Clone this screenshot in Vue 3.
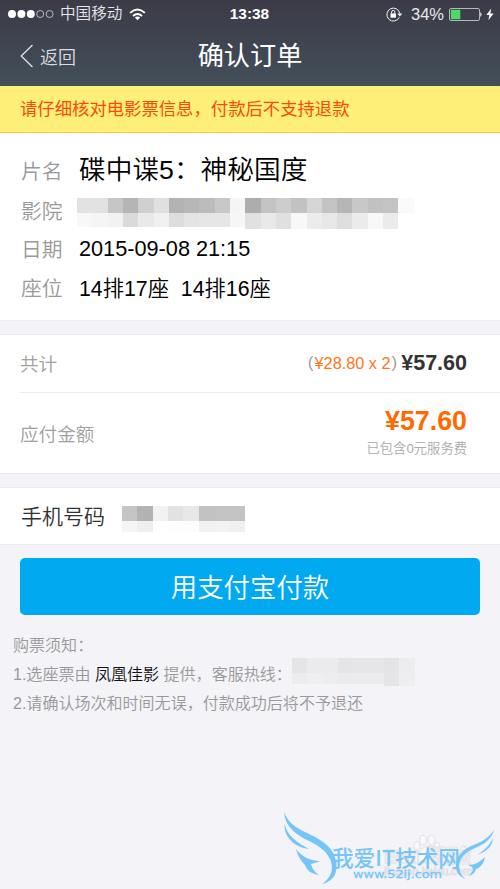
<script setup>
const cinema = [
  ['#e2e2e2', '#e2e2e2', '#c6c6c6', '#b5b5b5', '#d0d0d0', '#e0e0e0', '#b3b3b3', '#b7b7b7', '#bcbcbc', '#c8c8c8', '#f5f5f5', '#adadad', '#c3c3c3', '#cdcdcd', '#c2c2c2', '#d5d5d5', '#c3c3c3', '#b6b6b6', '#c8c8c8', '#c1c1c1', '#c3c3c3', '#fafafa'],
  ['#f8f8f8', '#f5f5f5', '#f2f2f2', '#dadada', '#e9e9e9', '#f0f0f0', '#dddddd', '#e4e4e4', '#e6e6e6', '#e6e6e6', '#f6f6f6', '#e1e1e1', '#e9e9e9', '#e0e0e0', '#f8f8f8', '#ececec', '#e7e7e7', '#dedede', '#ebebeb', '#f8f8f8', '#ebebeb', '#ffffff']
]
const phone = [
  ['#c5c5c5', '#b2b2b2', '#f2f2f2', '#e2e2e2', '#e8e8e8', '#c2c2c2', '#c3c3c3', '#c3c3c3'],
  ['#f5f5f5', '#efefef', '#ffffff', '#fefefe', '#fdfdfd', '#f2f2f2', '#f3f3f3', '#f0f0f0']
]
const hotline = [
  ['#e5e5e7', '#ebebed', '#ebebee', '#e5e5e8', '#e6e6e9', '#e6e6e9', '#e4e4e6', '#ededf0'],
  ['#ececef', '#efeff2', '#ededf0', '#ebebee', '#ebebee', '#ebebee', '#e5e5e7', '#eeeef1']
]
</script>

<template>
  <div class="screen">
    <header class="top">
      <div class="status">
        <div class="side">
          <svg class="dots" width="46" height="10" viewBox="0 0 46 10">
            <circle cx="4" cy="5" r="4" fill="#fff" /><circle cx="13.4" cy="5" r="4" fill="#fff" /><circle cx="22.8" cy="5" r="4" fill="#fff" />
            <circle cx="32.2" cy="5" r="3.5" fill="none" stroke="#d5d8dc" stroke-width=".8" /><circle cx="41.6" cy="5" r="3.5" fill="none" stroke="#d5d8dc" stroke-width=".8" />
          </svg>
          <span class="carrier">中国移动</span>
          <svg class="wifi" width="17" height="13" viewBox="0 0 18 13" fill="none" stroke="#fff" stroke-width="2">
            <path d="M1.2 4.8Q9-2.2 16.8 4.8M4.2 8Q9 3.8 13.8 8" />
            <path d="M6.2 9.8Q9 7.6 11.8 9.8L9 12.6Z" fill="#fff" stroke="none" />
          </svg>
        </div>
        <span class="clock">13:38</span>
        <div class="side end">
          <svg class="lock" width="17" height="15" viewBox="0 0 17 15" fill="none" stroke="#f1f2f4" stroke-width="1">
            <path d="M13.3 10.3A6.5 6.5 0 1 1 13.8 6.5" />
            <path d="M11.3 6.5h5l-2.5 3z" fill="#f1f2f4" stroke="none" />
            <rect x="4.5" y="6.4" width="5.4" height="4.3" fill="#fff" stroke="none" />
            <path d="M5.6 6.5V5a1.6 1.6 0 0 1 3.2 0v1.5" />
          </svg>
          <span class="percent">34%</span>
          <svg class="battery" width="34" height="13" viewBox="0 0 34 13">
            <rect x=".5" y=".5" width="30" height="12" rx="1.5" fill="none" stroke="#b4b7bd" />
            <rect x="1.8" y="1.8" width="9.5" height="9.4" fill="#4cd964" />
            <path d="M31.3 4q2.600 2.500 0 5z" fill="#fff" />
          </svg>
          <svg class="bolt" width="8" height="13" viewBox="0 0 8 13"><path d="M5.2.5L.4 7h3L2.4 12.3 7.6 5.4H4.4z" fill="#fff" /></svg>
        </div>
      </div>
      <nav class="nav">
        <div class="back">
          <svg width="14" height="24" viewBox="0 0 14 24"><path d="M12.5 1L1.2 12l11.3 11" fill="none" stroke="#dfe2e5" stroke-width="1.3" /></svg>
          <span>返回</span>
        </div>
        <h1>确认订单</h1>
      </nav>
    </header>

    <div class="notice">请仔细核对电影票信息，付款后不支持退款</div>

    <section class="info">
      <div class="row film"><span class="label">片名</span><span class="film-name">碟中谍5：神秘国度</span></div>
      <div class="row cinema">
        <span class="label">影院</span>
        <svg class="mosaic" width="337" height="31" shape-rendering="crispEdges">
          <g v-for="(line, r) in cinema" :key="r">
            <rect v-for="(c, i) in line" :key="i" :x="i * 15.3" :y="r * 15.4" width="15.4" :height="r && i < 11 ? 13.5 : 15.4" :fill="c" />
          </g>
        </svg>
      </div>
      <div class="row date"><span class="label">日期</span><span class="date-text">2015-09-08 21:15</span></div>
      <div class="row seat"><span class="label">座位</span><span class="seat-text">14排17座&nbsp; 14排16座</span></div>
    </section>

    <section class="bill">
      <div class="total">
        <span>共计</span>
        <div class="sum"><i>(</i><span class="unit">¥28.80 x 2</span><i>)</i><b>¥57.60</b></div>
      </div>
      <div class="due">
        <span>应付金额</span>
        <div class="due-sum"><b>¥57.60</b><small>已包含0元服务费</small></div>
      </div>
    </section>

    <section class="phone">
      <span>手机号码</span>
      <svg class="mosaic" width="123" height="27" shape-rendering="crispEdges">
        <g v-for="(line, r) in phone" :key="r">
          <rect v-for="(c, i) in line" :key="i" :x="i * 15.3" :y="r * 15.4" width="15.4" :height="r ? 11 : 15.4" :fill="c" />
        </g>
      </svg>
    </section>

    <button class="pay">用支付宝付款</button>

    <div class="notes">
      <p>购票须知：</p>
      <p>
        <span>1.选座票由 <em>凤凰佳影</em> 提供，客服热线：</span>
        <svg class="mosaic" width="123" height="29" shape-rendering="crispEdges">
          <g v-for="(line, r) in hotline" :key="r">
            <rect v-for="(c, i) in line" :key="i" :x="i * 15.3" :y="r * 15.4" width="15.4" :height="r ? (i > 5 ? 13 : 11) : 15.4" :fill="c" />
          </g>
        </svg>
      </p>
      <p>2.请确认场次和时间无误，付款成功后将不予退还</p>
    </div>

    <svg class="watermark" width="230" height="89" viewBox="270 800 230 89">
      <g fill="#f9f9fb" stroke="#e2e2e6" stroke-width="1">
        <ellipse cx="417" cy="846" rx="3" ry="4.300" /><ellipse cx="423" cy="840" rx="3.400" ry="4.700" /><ellipse cx="431.500" cy="840" rx="3.400" ry="4.700" /><ellipse cx="437" cy="847" rx="3" ry="4.300" />
        <path d="M427.500 846c5 0 10 8 10 13s-20 5-20 0 5-13 10-13z" />
        <text x="384" y="863" class="ghost" textLength="87" lengthAdjust="spacingAndGlyphs">Bai 经验</text>
        <text x="384" y="875" class="ghost-url" textLength="88" lengthAdjust="spacingAndGlyphs">jingyan.baidu.com</text>
      </g>
      <g fill="#76c5f8">
        <path d="M284 812C289 825 299 829 311 835C324 841 334 849 336 861C338 873 334 881 322 884C332 877 334 868 330 859C325 849 317 845 307 840C295 834 285 826 284 812Z" />
        <path d="M284.500 824C288 837 297 842 309 849C295 847 284 838 284.500 824Z" />
        <path d="M296 849C302 857 309 860 320 861.500L311 864C312 869 315 872 319 875C312 874 307 871 305 865C302 862 298 857 296 849Z" />
        <path d="M494.500 829.500C490 842 482 845 473 849C462 854 457 862 460 871C461 875 463 877 466 879C457 876 454 868 457 860C460 852 467 847 476 844C484 841 490 836 494.500 829.500Z" />
        <path d="M493 838C492 847 487 851 477 855C485 850 489 846 493 838Z" />
        <path d="M485 857C484 863 481 867 476 869C475 873 472 875 468 876C472 873 474 870 472 867L468 865C475 865 480 862 485 857Z" />
        <text x="332" y="865.500" class="brand" textLength="128" lengthAdjust="spacingAndGlyphs">我爱IT技术网</text>
        <text x="353" y="878" class="url" textLength="89" lengthAdjust="spacingAndGlyphs">www.52ij.com</text>
      </g>
    </svg>
  </div>
</template>

<style>
body { margin: 0; background: #f3f3f8; }
</style>

<style scoped>
* { box-sizing: border-box; }
.screen { position: relative; width: 500px; height: 889px; overflow: hidden; background: #f3f3f8; font-family: "Liberation Sans", "Noto Sans CJK SC", sans-serif; font-weight: 350; color: #000; }
svg { display: block; flex: none; }
span, b, small, i { white-space: nowrap; }
.top { height: 86px; background: linear-gradient(#3b3b47, #434f59); color: #fff; }
.status { height: 28px; display: grid; grid-template-columns: 1fr auto 1fr; align-items: center; padding: 0 6px 0 8px; }
.side { display: flex; align-items: center; }
.end { justify-content: flex-end; }
.carrier { margin-left: 6px; font-size: 15.6px; color: #e5e7ea; line-height: 28px; }
.wifi { margin-left: 7px; }
.clock { font-size: 15.4px; font-weight: 700; margin-right: 3px; }
.percent { margin: 0 5px 0 8px; font-size: 16.5px; color: #e8e9ec; }
.bolt { margin-left: 3px; }
.nav { height: 54px; display: grid; grid-template-columns: 1fr auto 1fr; align-items: center; padding: 0 20px; }
.back { display: flex; align-items: center; gap: 6px; font-size: 18px; color: #d9dce0; padding-top: 1px; }
h1 { margin: 0; padding-top: 2px; font-size: 26.2px; font-weight: 400; line-height: 52px; }
.notice { height: 47px; padding-left: 20px; line-height: 46px; font-size: 17.35px; font-weight: 400; color: #fa4b0a; background: #fdef78; border-bottom: 1px solid #f8c64a; }
.info { height: 188px; padding: 17px 0 0 21px; background: #fff; border-bottom: 1px solid #eeeeef; }
.row { display: flex; align-items: center; height: 39px; }
.label { width: 58px; font-size: 20.8px; color: #999; }
.film .label { padding-top: 1px; }
.film-name { font-size: 26.7px; margin-top: -4px; }
.cinema { padding-top: 2px; }
.cinema .mosaic { margin-left: -2px; margin-top: 7px; }
.date-text { font-size: 21.7px; margin-top: 3px; }
.seat-text { font-size: 21.3px; }
.bill { margin-top: 13px; height: 140px; background: #fff; border: solid #ebebed; border-width: 1px 0; color: #a0a0a0; font-size: 18.6px; }
.total { height: 58px; margin-left: 20px; padding-right: 33px; display: flex; align-items: center; justify-content: space-between; border-bottom: 1px solid #ececee; }
.total > span, .due > span { margin-top: -2px; }
.sum { display: flex; align-items: center; }
.sum i { font-style: normal; font-size: 17px; margin: 0 1px 2px; }
.unit { font-size: 16.3px; color: #ff7519; }
.sum b { margin-left: 3px; font-size: 21.5px; font-weight: 700; color: #333; }
.due { height: 80px; padding: 0 33px 0 20px; display: flex; align-items: center; justify-content: space-between; }
.due-sum { display: flex; flex-direction: column; align-items: flex-end; }
.due-sum b { font-size: 26.8px; font-weight: 700; line-height: 32px; color: #ff6900; }
.due-sum small { font-size: 13.3px; line-height: 24px; color: #aaa; }
.phone { margin-top: 13px; height: 58px; padding-left: 21px; display: flex; align-items: center; background: #fff; border: solid #ebebed; border-width: 1px 0; font-size: 21px; color: #333; }
.phone > span { margin-top: -2px; }
.phone .mosaic { margin: 6px 0 0 17px; }
.pay { display: block; width: 460px; height: 57px; margin: 13px 20px 0; padding: 0 0 2px; border: 0; border-radius: 5px; background: #00a9f0; color: #fff; font: 350 26.4px/55px "Noto Sans CJK SC", sans-serif; }
.notes { padding: 14px 0 0 13px; font-size: 16.05px; color: #999; }
.notes p { margin: 0; height: 29px; display: flex; align-items: center; white-space: nowrap; }
.notes .mosaic { margin-top: -1px; }
.notes em { font-style: normal; color: #111; }
.watermark { position: absolute; left: 270px; top: 800px; }
.ghost { font: 700 19px "Liberation Sans", "Noto Sans CJK SC", sans-serif; }
.ghost-url { font: 10px "Liberation Sans", sans-serif; }
.brand { font: 500 22px "Noto Sans CJK SC", sans-serif; }
.url { font: 400 11px "DejaVu Sans", sans-serif; stroke: #76c5f8; stroke-width: .3; }
</style>
